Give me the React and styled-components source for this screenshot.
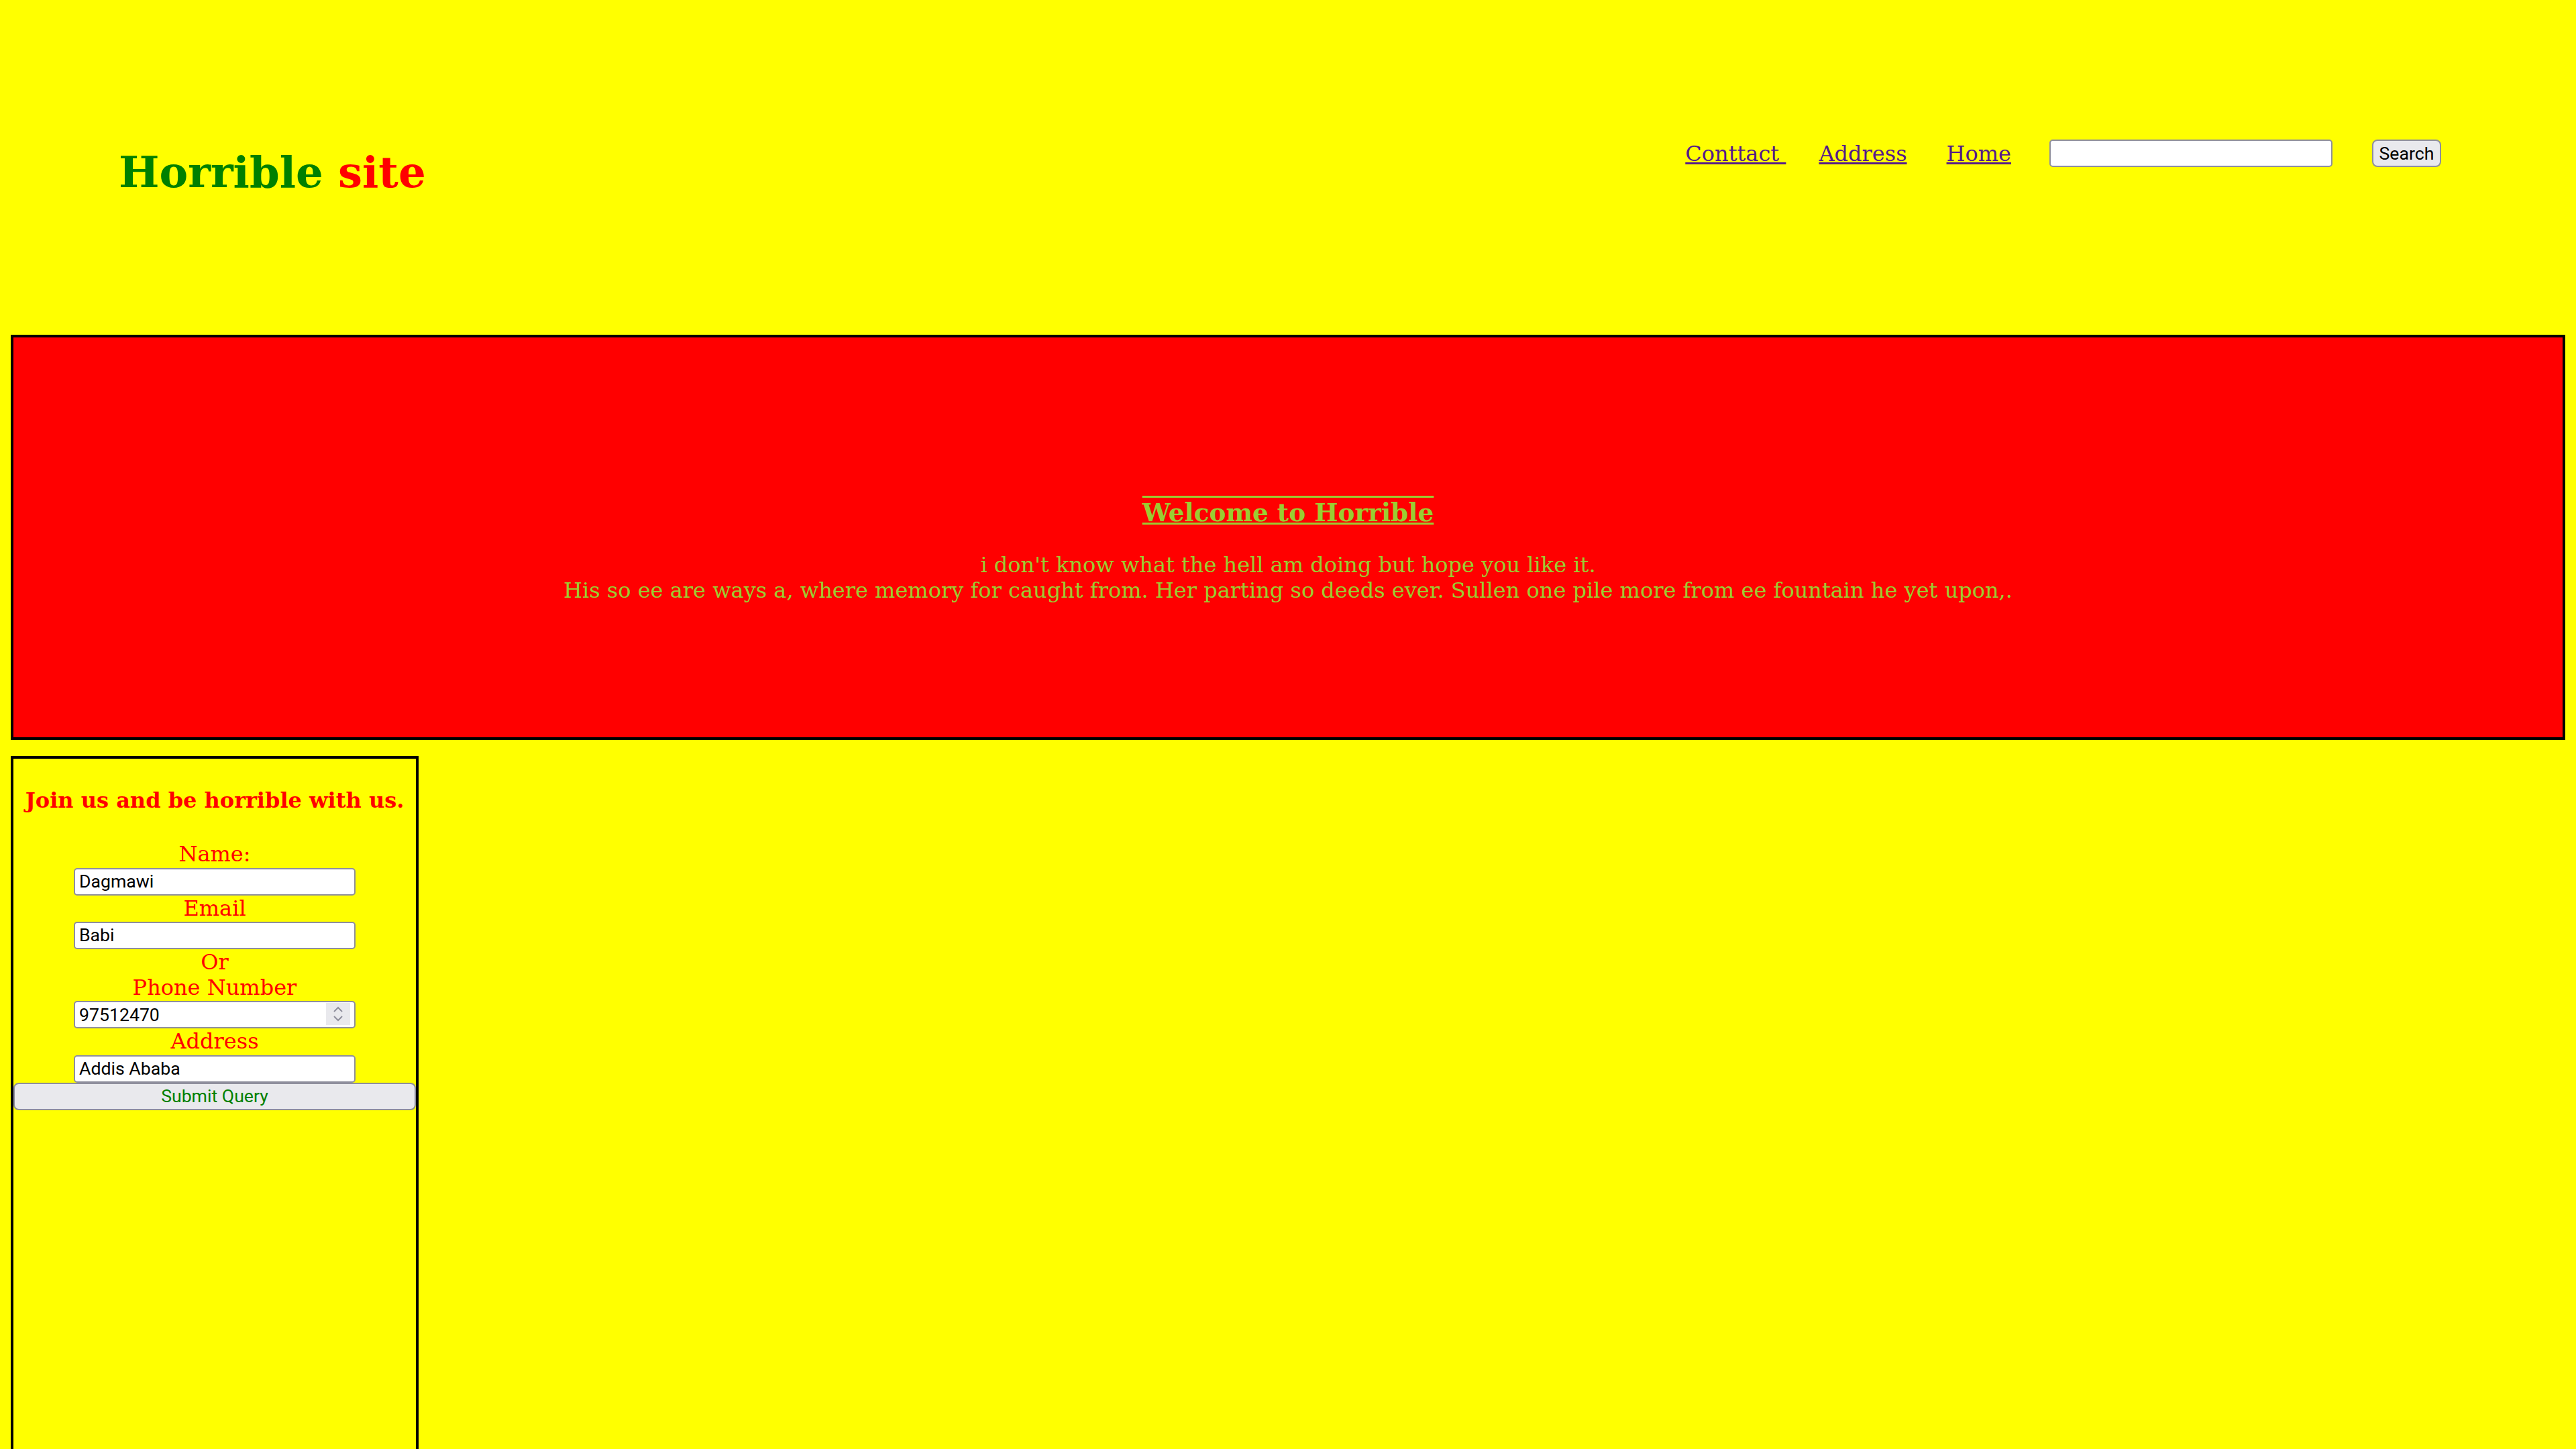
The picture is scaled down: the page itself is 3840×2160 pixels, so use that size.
import React from 'react';
import styled, { createGlobalStyle } from 'styled-components';

const GlobalStyle = createGlobalStyle`
    html, body {
        background: #ffff00;
    }
    body {
        margin: 16px;
        font-family: 'DejaVu Serif', 'Liberation Serif', serif;
        font-size: 32px;
    }
`

const ChevronUp = () => (
    <svg width="14" height="9" viewBox="0 0 14 9">
        <path d="M1 8 L7 2 L13 8" fill="none" stroke="#8f8f9d" strokeWidth="2" />
    </svg>
)

const ChevronDown = () => (
    <svg width="14" height="9" viewBox="0 0 14 9">
        <path d="M1 1 L7 7 L13 1" fill="none" stroke="#8f8f9d" strokeWidth="2" />
    </svg>
)

const App = () => {
    return (
        <>
            <GlobalStyle />
            <Header>
                <Logo>
                    <Green>Horrible</Green> <Red>site</Red>
                </Logo>
                <Nav>
                    <NavLink href="#" $gap={49}>Conttact&nbsp;</NavLink>
                    <NavLink href="#" $gap={59}>Address</NavLink>
                    <NavLink href="#" $gap={57}>Home</NavLink>
                    <SearchInput type="text" />
                    <Button $gapLeft={59}>Search</Button>
                </Nav>
            </Header>

            <Hero>
                <HeroTitle>Welcome to Horrible</HeroTitle>
                <HeroText>
                    i don't know what the hell am doing but hope you like it.<br />
                    His so ee are ways a, where memory for caught from. Her parting so deeds ever. Sullen one pile more from ee fountain he yet upon,.
                </HeroText>
            </Hero>

            <FormBox>
                <FormTitle>Join us and be horrible with us.</FormTitle>
                <Label>Name:</Label>
                <Field type="text" defaultValue="Dagmawi" />
                <Label>Email</Label>
                <Field type="text" defaultValue="Babi" />
                <Label>Or</Label>
                <Label>Phone Number</Label>
                <SpinWrap>
                    <Field type="text" defaultValue="97512470" />
                    <Spinner>
                        <ChevronUp />
                        <ChevronDown />
                    </Spinner>
                </SpinWrap>
                <Label>Address</Label>
                <Field type="text" defaultValue="Addis Ababa" />
                <Submit>Submit Query</Submit>
            </FormBox>
        </>
    )
}

export default App

const Header = styled.header`
    display: flex;
    align-items: flex-start;
    height: 483px;
    padding: 0 185px 0 161px;
`

const Logo = styled.h1`
    margin: 203px 0 0 0;
    font-size: 64px;
    font-weight: bold;
    line-height: normal;
`

const Green = styled.span`
    color: #008000;
`

const Red = styled.span`
    color: #ff0000;
`

const Nav = styled.nav`
    display: flex;
    align-items: center;
    margin-left: auto;
    margin-top: 192px;
    height: 41px;
`

const NavLink = styled.a`
    color: #551a8b;
    font-size: 32px;
    text-decoration: underline;
    margin-right: ${props => props.$gap}px;
`

const SearchInput = styled.input`
    box-sizing: border-box;
    width: 422px;
    height: 41px;
    border: 2px solid #8f8f9d;
    border-radius: 5px;
    background: #ffffff;
    padding: 0 8px;
    font-family: 'Roboto', 'Noto Sans', sans-serif;
    font-size: 26.67px;
`

const Button = styled.button`
    box-sizing: border-box;
    width: 103px;
    height: 41px;
    margin-left: ${props => props.$gapLeft || 0}px;
    padding: 0;
    border: 2px solid #8f8f9d;
    border-radius: 8px;
    background: #e9e9ed;
    color: #000000;
    font-family: 'Roboto', 'Noto Sans', sans-serif;
    font-size: 26.67px;
`

const Hero = styled.section`
    box-sizing: border-box;
    height: 604px;
    border: 4px solid #000000;
    background: #ff0000;
    padding-top: 239px;
    text-align: center;
    color: #9acd32;
`

const HeroTitle = styled.h3`
    margin: 0 0 37px 0;
    font-size: 37.44px;
    font-weight: bold;
    line-height: normal;
    text-decoration: underline overline;
`

const HeroText = styled.p`
    margin: 0;
    font-size: 32px;
    line-height: normal;
`

const FormBox = styled.div`
    box-sizing: border-box;
    width: 608px;
    height: 5577px;
    margin-top: 24px;
    border: 4px solid #000000;
    display: flex;
    flex-direction: column;
    align-items: center;
    text-align: center;
`

const FormTitle = styled.h4`
    margin: 42.6px 0;
    font-size: 32px;
    font-weight: bold;
    line-height: normal;
    color: #ff0000;
`

const Label = styled.label`
    display: block;
    font-size: 32px;
    line-height: normal;
    color: #ff0000;
`

const Field = styled.input`
    box-sizing: border-box;
    display: block;
    width: 420px;
    height: 41px;
    margin-top: 1.4px;
    border: 2px solid #8f8f9d;
    border-radius: 5px;
    background: #ffffff;
    padding: 0 6px;
    color: #000000;
    font-family: 'Roboto', 'Noto Sans', sans-serif;
    font-size: 26.67px;
`

const SpinWrap = styled.div`
    position: relative;
`

const Spinner = styled.span`
    position: absolute;
    top: 4px;
    right: 8px;
    width: 36px;
    height: 33px;
    background: #e9e9ed;
    display: flex;
    flex-direction: column;
    align-items: center;
    justify-content: center;
    gap: 5px;
`

const Submit = styled.button`
    box-sizing: border-box;
    width: 600px;
    height: 41px;
    border: 2px solid #8f8f9d;
    border-radius: 8px;
    background: #e9e9ed;
    color: #008000;
    font-family: 'Roboto', 'Noto Sans', sans-serif;
    font-size: 26.67px;
`
